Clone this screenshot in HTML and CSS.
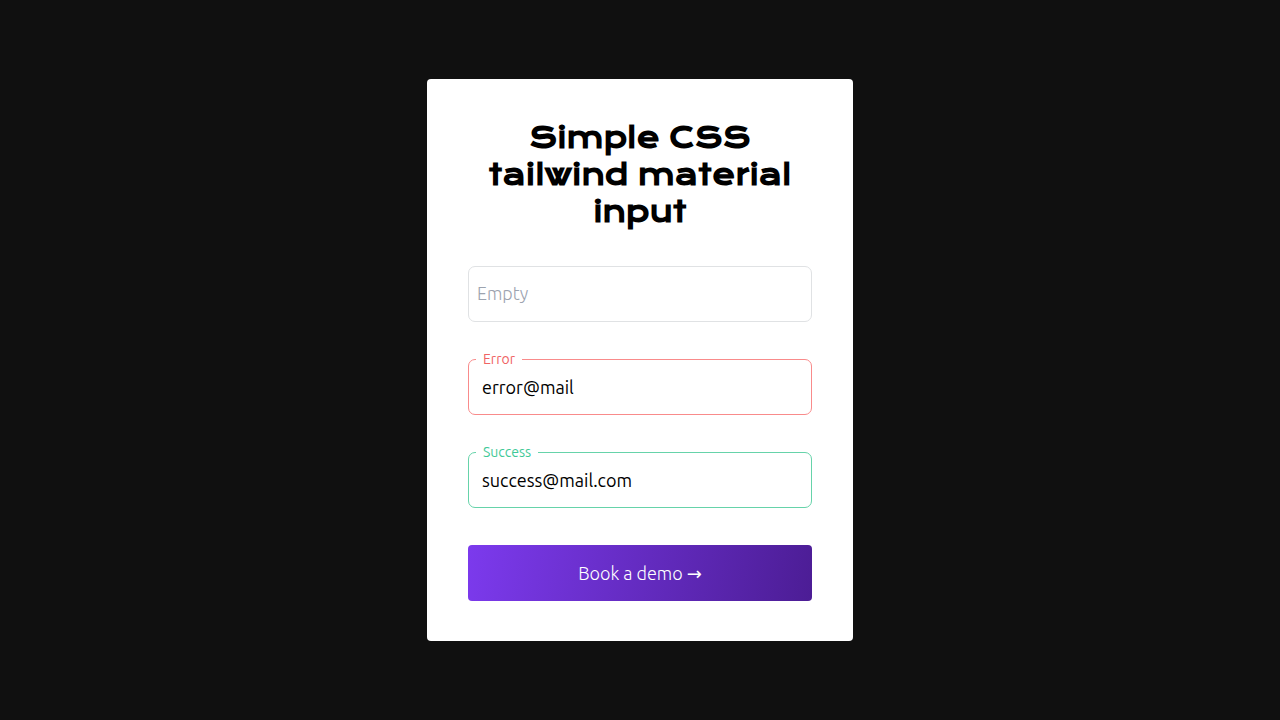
FILE: index.html
```html
<!DOCTYPE html>
<html lang="en">
<head>
    <meta charset="UTF-8">
    <meta name="viewport" content="width=device-width, initial-scale=1.0">
    <title>Simple CSS tailwind material input</title>
    <link rel="stylesheet" href="styles.css">
</head>
<body>
    <main class="card">
        <h1 class="title">Simple CSS tailwind material input</h1>
        <form class="form">
            <div class="field">
                <input type="text" id="empty" class="field-input" placeholder=" ">
                <label for="empty" class="field-label">Empty</label>
            </div>
            <div class="field field-error">
                <input type="text" id="error" class="field-input" placeholder=" " value="error@mail">
                <label for="error" class="field-label">Error</label>
            </div>
            <div class="field field-success">
                <input type="text" id="success" class="field-input" placeholder=" " value="success@mail.com">
                <label for="success" class="field-label">Success</label>
            </div>
            <button type="button" class="submit">Book a demo <span class="arrow">→</span></button>
        </form>
    </main>
</body>
</html>
```
FILE: styles.css
```css
* {
    box-sizing: border-box;
}

body {
    margin: 0;
    min-height: 100vh;
    display: flex;
    align-items: center;
    justify-content: center;
    background: #101010;
    font-family: Ubuntu, "Open Sans", "Noto Sans", sans-serif;
    font-weight: 300;
}

.card {
    width: 100%;
    max-width: 426px;
    padding: 40px 41px;
    background: #fff;
    border-radius: 4px;
}

.title {
    margin: 0 0 36px;
    font-family: "Krona One", Lato, sans-serif;
    font-size: 28px;
    font-weight: 700;
    line-height: 37px;
    text-align: center;
    color: #000;
}

.form {
    display: flex;
    flex-direction: column;
    gap: 37px;
}

.field {
    position: relative;
}

.field-input {
    display: block;
    width: 100%;
    height: 56px;
    padding: 0 13px;
    border: 1px solid #e0e2e4;
    border-radius: 7px;
    background: #fff;
    font: inherit;
    font-size: 18px;
    font-weight: 400;
    color: #000;
    outline: none;
}

/* the label rests inside an empty field and sits on the border of a filled one */
.field-label {
    position: absolute;
    top: 0;
    left: 9px;
    font-size: 18px;
    line-height: 54px;
    color: #9ca3af;
    pointer-events: none;
}

.field-input:focus + .field-label,
.field-input:not(:placeholder-shown) + .field-label {
    top: -9px;
    left: 8px;
    padding: 0 7px;
    background: #fff;
    font-size: 14px;
    font-weight: 400;
    line-height: 18px;
}

.field-error .field-input {
    border-color: #f98b8b;
}

.field-error .field-label {
    color: #f06464;
}

.field-success .field-input {
    border-color: #66d3aa;
}

.field-success .field-label {
    color: #3fc997;
}

.submit {
    height: 56px;
    border: 1px solid transparent;
    border-radius: 4px;
    background: linear-gradient(100deg, #7c3aed, #4c1d95) border-box;
    font: inherit;
    font-size: 18px;
    color: #fff;
    cursor: pointer;
}

.arrow {
    font-family: "Noto Sans", "DejaVu Sans", sans-serif;
    font-weight: 400;
}
```
